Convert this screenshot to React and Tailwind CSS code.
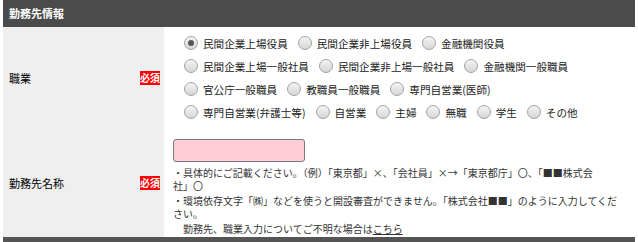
import React from 'react';

const Badge = () => (
  <span className="w-[20px] h-[14px] bg-[#ff0000] text-white text-[10px] leading-[14px] font-bold text-center">
    必須
  </span>
);

const Radio = ({ label, checked }) => (
  <label className="flex items-center ml-[11px] mr-[-1px]">
    <span className="w-[14px] h-[14px] rounded-full border border-[#a3a3a3] bg-linear-to-b from-[#f4f4f4] to-[#d6d6d6] flex items-center justify-center shrink-0">
      {checked && <span className="w-[6px] h-[6px] rounded-full bg-[#575757]" />}
    </span>
    <span className="ml-[5px] text-[10.6px] text-[#222] whitespace-nowrap">{label}</span>
  </label>
);

const jobRows = [
  ['民間企業上場役員', '民間企業非上場役員', '金融機関役員'],
  ['民間企業上場一般社員', '民間企業非上場一般社員', '金融機関一般職員'],
  ['官公庁一般職員', '教職員一般職員', '専門自営業(医師)'],
  ['専門自営業(弁護士等)', '自営業', '主婦', '無職', '学生', 'その他'],
];

const App = () => {
  return (
    <div className="px-[3px] bg-white font-['Noto_Sans_CJK_JP',sans-serif] text-[#222]">
      <div className="h-[27px] bg-[#4b4b4b] flex items-center pl-[6px] text-white text-[11px] font-bold">
        勤務先情報
      </div>

      {/* 職業 */}
      <div className="flex">
        <div className="w-[161px] shrink-0 bg-[#efefef] flex items-center justify-between pl-[6px] pr-[4px]">
          <span className="text-[11px] text-black">職業</span>
          <Badge />
        </div>
        <div className="flex-1 pl-[9px] py-[5px]">
          {jobRows.map((row, i) => (
            <div key={i} className="h-[23px] flex items-center">
              {row.map((label, j) => (
                <Radio key={label} label={label} checked={i === 0 && j === 0} />
              ))}
            </div>
          ))}
        </div>
      </div>

      {/* 勤務先名称 */}
      <div className="flex">
        <div className="w-[161px] shrink-0 bg-[#efefef] flex items-center justify-between pl-[6px] pr-[4px]">
          <span className="text-[11px] text-black">勤務先名称</span>
          <Badge />
        </div>
        <div className="flex-1 pl-[9px] pt-[10px] pb-[2px]">
          <input
            type="text"
            className="block w-[132px] h-[23px] bg-[#ffcdd6] border border-[#7a7a7a] rounded-[3px] outline-none"
          />
          <div className="mt-[4px] text-[10px] leading-[13px] text-[#333] whitespace-nowrap">
            <p>
              ・具体的にご記載ください。（例）「東京都」×、「会社員」×→「東京都庁」〇、「■■株式会
              <br />
              社」〇
            </p>
            <p className="mt-[2px]">
              ・環境依存文字「㈱」などを使うと開設審査ができません。「株式会社■■」のように入力してくだ
              <br />
              さい。
            </p>
            <p className="mt-[2px]">
              {'\u3000'}勤務先、職業入力についてご不明な場合は<a href="#" className="underline">こちら</a>
            </p>
          </div>
        </div>
      </div>

      <div className="h-[27px] bg-[#555555]" />
    </div>
  );
};

export default App;
